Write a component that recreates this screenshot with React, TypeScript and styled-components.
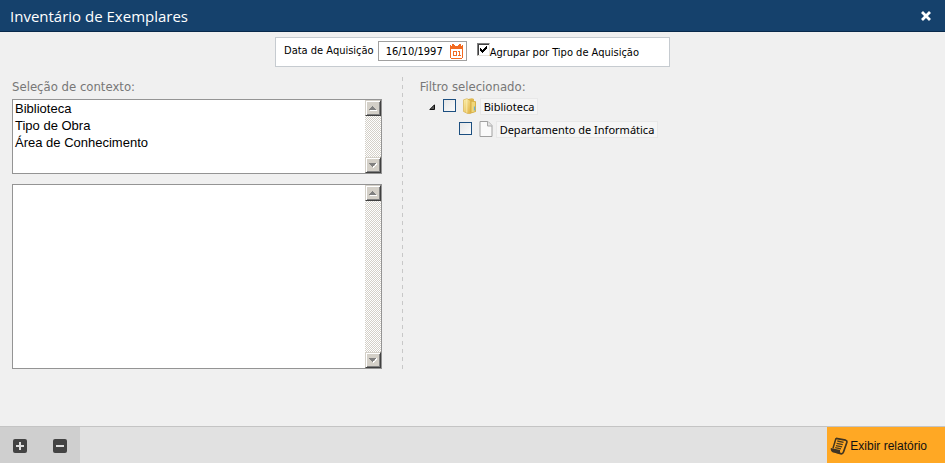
import React, { useState } from 'react';
import styled, { createGlobalStyle } from 'styled-components';

const GlobalStyle = createGlobalStyle`
  * { box-sizing: border-box; }
  body { margin: 0; background: #f0f0f0; }
  button, input, select { font: inherit; color: inherit; margin: 0; padding: 0; }
`;

const ui = '"DejaVu Sans Condensed", "Noto Sans", sans-serif';
const humanist = '"Open Sans", "Noto Sans", sans-serif';
const grotesque = '"Liberation Sans", Arial, sans-serif';

const Page = styled.div`
  min-height: 100vh;
  display: flex;
  flex-direction: column;
  background: #f0f0f0;
  color: #000;
  font-family: ${ui};
  font-size: 11px;
`;

const Header = styled.header`
  height: 32px;
  padding: 0 13px 0 10px;
  display: flex;
  align-items: center;
  justify-content: space-between;
  background: #15416c;
  border-bottom: 1px solid #08294b;
`;

const Title = styled.h1`
  margin: 0;
  color: #fff;
  font: 400 15px/20px ${humanist};
`;

const IconButton = styled.button`
  display: grid;
  place-items: center;
  border: 0;
  background: none;
  cursor: pointer;
`;

const FilterBar = styled.form`
  align-self: center;
  height: 30px;
  margin-top: 5px;
  padding: 0 30px 0 8px;
  display: flex;
  align-items: flex-start;
  background: #fff;
  border: 1px solid #c6cbd0;
`;

const FieldLabel = styled.label`
  padding-top: 5px;
  line-height: 16px;
  white-space: nowrap;
`;

const DateBox = styled.div`
  width: 89px;
  height: 20px;
  margin: 3px 10px 0 4px;
  padding: 0 3px 0 7px;
  display: flex;
  align-items: center;
  background: #fff;
  border: 1px solid #a0a0a0;
`;

const DateInput = styled.input`
  flex: 1;
  min-width: 0;
  padding-top: 1px;
  border: 0;
  outline: 0;
  background: none;
  line-height: 16px;
`;

const CheckLabel = styled.label`
  display: flex;
  align-items: flex-start;
  padding-top: 5px;
  white-space: nowrap;
`;

const CheckText = styled.span`
  padding-top: 2px;
  line-height: 16px;
`;

const CheckHolder = styled.span`
  display: grid;
  width: 13px;
  height: 13px;
  > * { grid-area: 1 / 1; }
  > svg { pointer-events: none; }
`;

const SunkenCheck = styled.input`
  appearance: none;
  width: 13px;
  height: 13px;
  background: #fff;
  border: 1px solid;
  border-color: #808080 #e4e2dc #e4e2dc #808080;
  box-shadow: inset 1px 1px #404040;
`;

const Main = styled.main`
  flex: 1;
  padding: 10px 12px 0;
  display: grid;
  grid-template-columns: 11fr 15fr;
  align-items: start;
`;

const ContextColumn = styled.section`
  padding-right: 20px;
`;

const FilterColumn = styled.section`
  height: 292px;
  padding-left: 18px;
  background: repeating-linear-gradient(#c8c8c8 0 4px, transparent 4px 8px) 0 0 / 1px 100% no-repeat;
`;

const Caption = styled.h2`
  margin: 0;
  height: 22px;
  color: #777;
  font: 400 13px/19px ${ui};
`;

const ListFrame = styled.div<{ $height: number }>`
  height: ${(p) => p.$height}px;
  margin-bottom: 10px;
  display: flex;
  background: #fff;
  border: 1px solid #949494;
`;

const ListBox = styled.select`
  flex: 1;
  min-width: 0;
  padding-top: 1px;
  border: 0;
  border-radius: 0;
  outline: 0;
  background: #fff;
  overflow: hidden;
  font: 13px/17px ${grotesque};
`;

const ListItem = styled.option`
  min-height: 17px;
  padding: 0 2px;
  color: #000;
  line-height: 17px;
`;

const ScrollTrack = styled.div`
  width: 16px;
  display: flex;
  flex-direction: column;
  justify-content: space-between;
  background: repeating-conic-gradient(#d4d0c8 0 25%, #fff 0 50%) 0 0 / 2px 2px;
`;

const ScrollButton = styled.button`
  width: 16px;
  height: 16px;
  display: grid;
  place-items: center;
  background: #d4d0c8;
  border: 1px solid;
  border-color: #d4d0c8 #404040 #404040 #d4d0c8;
  box-shadow: inset 1px 1px #fff, inset -1px -1px #808080;
`;

const Tree = styled.ul`
  margin: 0;
  padding: 0;
  list-style: none;
`;

const TreeRow = styled.div<{ $depth: number }>`
  height: 23px;
  padding-left: ${(p) => 7 + p.$depth * 16}px;
  display: flex;
  align-items: flex-start;
`;

const Toggle = styled(IconButton)`
  width: 10px;
  height: 15px;
  margin-right: 6px;
`;

const ToggleGap = styled.span`
  width: 16px;
`;

const TreeCheck = styled.input`
  appearance: none;
  width: 13px;
  height: 13px;
  border: 1px solid #1c4f80;
  background: linear-gradient(135deg, #e6e6e6, #fafafa);
  &:checked { background: #1c4f80; }
`;

const NodeIcon = styled.span`
  width: 16px;
  height: 16px;
  margin: -1px 2px 0 6px;
`;

const NodeLabel = styled.label`
  height: 17px;
  margin-top: -1px;
  padding: 0 3px;
  border: 1px solid #e8e8e8;
  background: #f5f5f5;
  font: 11px/16px "Noto Sans", sans-serif;
  white-space: nowrap;
`;

const CheckSlot = styled.span`
  display: flex;
`;

const Footer = styled.footer`
  height: 37px;
  display: flex;
  justify-content: space-between;
  background: #e1e1e1;
  border-top: 1px solid #c4c4c4;
`;

const FooterTools = styled.div`
  padding: 0 10px;
  display: flex;
  gap: 20px;
  background: #cfcfcf;
`;

const ToolButton = styled(IconButton)`
  width: 20px;
  padding-top: 2px;
`;

const ReportButton = styled.button`
  padding: 2px 18px 0 3px;
  display: flex;
  align-items: center;
  gap: 2px;
  border: 0;
  background: #ffa824;
  color: #111;
  font: 12px/16px ${grotesque};
  cursor: pointer;
`;

function CloseIcon() {
  return (
    <svg width="12" height="12" viewBox="0 0 12 12" aria-hidden="true">
      <path d="M3 3l6 6M9 3l-6 6" stroke="#fff" strokeWidth="2.8" strokeLinecap="square" />
    </svg>
  );
}

function CalendarIcon() {
  return (
    <svg width="13" height="15" viewBox="0 0 13 15" shapeRendering="crispEdges" aria-hidden="true">
      <path d="M2 0h2v1h5V0h2v1h2v13h-1v1H1v-1H0V1h2z" fill="#f26a21" />
      <path d="M1 5h11v9H1z" fill="#fff" />
      <path d="M1 0h1v2H1zM4 0h1v2h3V0h1v1h2V0h1v2h-1V1H4zM0 0h2v1H0z" fill="#fff" />
      <path d="M3 7h4v5H3zM8 7h2v4h1v1H8v-1h1V8H8z" fill="#f26a21" />
      <path d="M4 8h2v3H4z" fill="#fff" />
    </svg>
  );
}

function CheckMark() {
  return (
    <svg width="13" height="13" viewBox="0 0 13 13" shapeRendering="crispEdges" aria-hidden="true">
      <path d="M3 5h1v1h1v1h1V6h1V5h1V4h1V3h1v3H9v1H8v1H7v1H6v1H5V9H4V8H3z" fill="#000" />
    </svg>
  );
}

function ScrollArrow({ up }: { up?: boolean }) {
  return (
    <svg width="10" height="8" viewBox="0 0 10 8" shapeRendering="crispEdges" aria-hidden="true">
      {up ? (
        <>
          <path d="M2 6h7v1H2z" fill="#fff" />
          <path d="M4 2h1v1h1v1h1v1h1v1H1V5h1V4h1V3h1z" fill="#808080" />
        </>
      ) : (
        <>
          <path d="M9 2v2H8v1H7v1H6v1H5V5h2V3h1V2z" fill="#fff" />
          <path d="M1 2h7v1H7v1H6v1H5v1H4V5H3V4H2V3H1z" fill="#808080" />
        </>
      )}
    </svg>
  );
}

function ExpandedIcon() {
  return (
    <svg width="6" height="6" viewBox="0 0 6 6" aria-hidden="true">
      <path d="M5.500.8v4.700H.8z" fill="#595959" stroke="#111" strokeWidth="1" />
    </svg>
  );
}

function FolderIcon() {
  return (
    <svg width="16" height="16" viewBox="0 0 16 16" aria-hidden="true">
      <defs>
        <linearGradient id="folderFront" x1="0" x2="1" y2="1">
          <stop offset="0" stopColor="#fdf2ae" />
          <stop offset="1" stopColor="#e0b040" />
        </linearGradient>
      </defs>
      <path d="M6 1l4-.7L12 1v2l2 .5v10l-4 1.500-3-1z" fill="#dfb850" />
      <path d="M9 3l4.500.8v9.800l-4.500 1.400z" fill="#f0d67a" stroke="#cfa236" strokeWidth=".6" />
      <path d="M1.500 1.800L5 .7l3.700 2v12.800L5.500 15.500l-4-2z" fill="url(#folderFront)" stroke="#d3a942" strokeWidth=".6" />
      <path d="M4.800 1.200v13.500" stroke="#fbf0bc" strokeWidth=".8" />
      <path d="M12.500 8.500v4" stroke="#66b0d8" strokeWidth="1.200" />
    </svg>
  );
}

function FileIcon() {
  return (
    <svg width="16" height="16" viewBox="0 0 16 16" aria-hidden="true">
      <path d="M2 .5h8L14 4.500v11H2z" fill="#fafafa" stroke="#a0a0a0" />
      <path d="M9.500.5v4.500H14" fill="#e4e4e4" stroke="#a8a8a8" />
    </svg>
  );
}

function SquareIcon({ plus }: { plus?: boolean }) {
  return (
    <svg width="14" height="14" viewBox="0 0 14 14" aria-hidden="true">
      <rect width="14" height="14" rx="2" fill="#434343" />
      <path d={plus ? 'M3 7h8M7 3v8' : 'M3 7h8'} stroke="#dedede" strokeWidth="2" />
    </svg>
  );
}

function ReportIcon() {
  return (
    <svg width="18" height="18" viewBox="0 0 18 18" aria-hidden="true">
      <path
        d="M6 1.300l9.600 1.900c1.100.3 1.500 1.200 1.200 2.300l-3.300 9.500c-.5 1.400-1.500 2-2.900 1.700L5 15"
        fill="none"
        stroke="#42351f"
        strokeWidth="1.700"
      />
      <path d="M6 1.300L3 11.300" stroke="#42351f" strokeWidth="1.500" />
      <path d="M.8 11l9.300 2c-.3 1.500 0 2.800 1 3.900L3 15.400C1.300 15 .4 13 .8 11z" fill="#3f3425" />
      <path d="M7.300 4l6.300 1.300M6.600 6.300l6.200 1.300M5.900 8.600l6.200 1.300M5.200 10.700l5.800 1.200" stroke="#4c3b1e" strokeWidth="1.300" />
    </svg>
  );
}

function ScrollList({ label, items, height }: { label: string; items: string[]; height: number }) {
  return (
    <ListFrame $height={height}>
      <ListBox multiple aria-label={label}>
        {items.map((item) => (
          <ListItem key={item}>{item}</ListItem>
        ))}
      </ListBox>
      <ScrollTrack>
        <ScrollButton type="button" aria-label={`${label}: rolar para cima`}>
          <ScrollArrow up />
        </ScrollButton>
        <ScrollButton type="button" aria-label={`${label}: rolar para baixo`}>
          <ScrollArrow />
        </ScrollButton>
      </ScrollTrack>
    </ListFrame>
  );
}

export default function App() {
  const [date, setDate] = useState('16/10/1997');
  const [grouped, setGrouped] = useState(true);
  const [open, setOpen] = useState(true);

  return (
    <Page>
      <GlobalStyle />
      <Header>
        <Title>Inventário de Exemplares</Title>
        <IconButton type="button" aria-label="Fechar">
          <CloseIcon />
        </IconButton>
      </Header>

      <FilterBar>
        <FieldLabel htmlFor="date">Data de Aquisição</FieldLabel>
        <DateBox>
          <DateInput id="date" type="text" value={date} onChange={(e) => setDate(e.target.value)} />
          <IconButton type="button" aria-label="Abrir calendário">
            <CalendarIcon />
          </IconButton>
        </DateBox>
        <CheckLabel>
          <CheckHolder>
            <SunkenCheck type="checkbox" checked={grouped} onChange={(e) => setGrouped(e.target.checked)} />
            {grouped && <CheckMark />}
          </CheckHolder>
          <CheckText>Agrupar por Tipo de Aquisição</CheckText>
        </CheckLabel>
      </FilterBar>

      <Main>
        <ContextColumn>
          <Caption>Seleção de contexto:</Caption>
          <ScrollList label="Contexto" height={75} items={['Biblioteca', 'Tipo de Obra', 'Área de Conhecimento']} />
          <ScrollList label="Itens do contexto" height={185} items={[]} />
        </ContextColumn>
        <FilterColumn>
          <Caption>Filtro selecionado:</Caption>
          <Tree>
            <li>
              <TreeRow $depth={0}>
                <Toggle type="button" aria-label="Expandir ou recolher" aria-expanded={open} onClick={() => setOpen(!open)}>
                  <ExpandedIcon />
                </Toggle>
                <CheckSlot>
                  <TreeCheck type="checkbox" id="library" />
                </CheckSlot>
                <NodeIcon>
                  <FolderIcon />
                </NodeIcon>
                <NodeLabel htmlFor="library">Biblioteca</NodeLabel>
              </TreeRow>
              {open && (
                <Tree>
                  <li>
                    <TreeRow $depth={1}>
                      <ToggleGap />
                      <CheckSlot>
                        <TreeCheck type="checkbox" id="department" />
                      </CheckSlot>
                      <NodeIcon>
                        <FileIcon />
                      </NodeIcon>
                      <NodeLabel htmlFor="department">Departamento de Informática</NodeLabel>
                    </TreeRow>
                  </li>
                </Tree>
              )}
            </li>
          </Tree>
        </FilterColumn>
      </Main>

      <Footer>
        <FooterTools>
          <ToolButton type="button" aria-label="Adicionar">
            <SquareIcon plus />
          </ToolButton>
          <ToolButton type="button" aria-label="Remover">
            <SquareIcon />
          </ToolButton>
        </FooterTools>
        <ReportButton type="button">
          <ReportIcon />
          Exibir relatório
        </ReportButton>
      </Footer>
    </Page>
  );
}
